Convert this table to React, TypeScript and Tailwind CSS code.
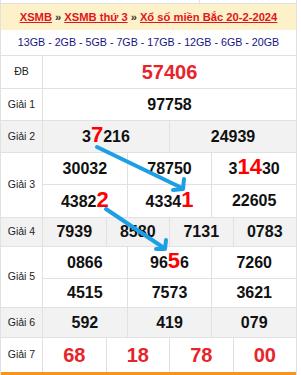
import React from 'react'

type Cell = React.ReactNode

function Red({children, big}: {children: React.ReactNode, big?: boolean}) {
    return <span className={big ? "text-[22px] text-[#ff0000] leading-none" : "text-[#ff0000]"}>{children}</span>
}

function Cells({items, h, last}: {items: Cell[], h: string, last?: boolean}) {
    return (
        <div className={`flex ${h} ${last ? "" : "border-b border-[#e1e1e1]"}`}>
            {items.map((c, i) => (
                <div key={i}
                     className={`flex-1 flex items-center justify-center text-[16px] font-bold text-[#111] ${i > 0 ? "border-l border-[#e1e1e1]" : ""}`}>
                    {c}
                </div>
            ))}
        </div>
    )
}

function Row({label, gray, h, children}: {label: string, gray?: boolean, h: string, children: React.ReactNode}) {
    return (
        <div className={`flex ${h} border-b border-[#e1e1e1] ${gray ? "bg-[#f2f2f2]" : "bg-white"}`}>
            <div className="w-[42px] shrink-0 flex items-center justify-center border-r border-[#e1e1e1] text-[10.5px] text-[#222]">
                {label}
            </div>
            <div className="flex-1 flex flex-col">{children}</div>
        </div>
    )
}

export default function App() {
    return (
        <div className="relative w-[301px] h-[375px] overflow-hidden bg-white font-[family-name:Liberation_Sans,Arial,sans-serif]">
            <div className="w-[297px] border-l border-r border-[#e1e1e1]">
                {/* bottom of previous table */}
                <div className="flex h-[4px] border-b border-[#e1e1e1]">
                    <div className="w-[199px] border-r border-[#e1e1e1]"></div>
                    <div className="flex-1"></div>
                </div>

                <div className="h-[26px] bg-[#fcf1c8] flex items-center justify-center text-[11.2px] font-bold text-[#333] whitespace-nowrap">
                    <a className="text-[#e3141c] underline">XSMB</a>
                    <span className="mx-[3px]">»</span>
                    <a className="text-[#e3141c] underline">XSMB thứ 3</a>
                    <span className="mx-[3px]">»</span>
                    <a className="text-[#e3141c] underline">Xổ số miền Bắc 20-2-2024</a>
                </div>

                <div className="h-[26px] flex items-center justify-center border-b border-[#e1e1e1] text-[10.7px] text-[#141482] whitespace-nowrap">
                    13GB - 2GB - 5GB - 7GB - 17GB - 12GB - 6GB - 20GB
                </div>

                <Row label="ĐB" h="h-[33px]">
                    <Cells last h="h-full" items={[<span className="text-[20px] text-[#e8242b]">57406</span>]}/>
                </Row>

                <Row label="Giải 1" h="h-[32px]">
                    <Cells last h="h-full" items={["97758"]}/>
                </Row>

                <Row label="Giải 2" gray h="h-[32px]">
                    <Cells last h="h-full" items={[<span>3<Red big>7</Red>216</span>, "24939"]}/>
                </Row>

                <Row label="Giải 3" h="h-[65px]">
                    <Cells h="h-[32px]" items={["30032", "78750", <span>3<Red big>14</Red>30</span>]}/>
                    <Cells last h="h-[32px]" items={[<span>4382<Red big>2</Red></span>, <span>4334<Red big>1</Red></span>, "22605"]}/>
                </Row>

                <Row label="Giải 4" gray h="h-[29px]">
                    <Cells last h="h-full" items={["7939", "8580", "7131", "0783"]}/>
                </Row>

                <Row label="Giải 5" h="h-[61px]">
                    <Cells h="h-[32px]" items={["0866", <span>96<Red big>5</Red>6</span>, "7260"]}/>
                    <Cells last h="h-[28px]" items={["4515", "7573", "3621"]}/>
                </Row>

                <Row label="Giải 6" gray h="h-[30px]">
                    <Cells last h="h-full" items={["592", "419", "079"]}/>
                </Row>

                <div className="flex h-[38px] border-b-4 border-[#f7941d] bg-white">
                    <div className="w-[42px] shrink-0 flex items-center justify-center border-r border-[#e1e1e1] text-[10.5px] text-[#222]">
                        Giải 7
                    </div>
                    <div className="flex-1 flex">
                        {["68", "18", "78", "00"].map((n, i) => (
                            <div key={n}
                                 className={`flex-1 flex items-center justify-center text-[20px] font-bold text-[#e8242b] ${i > 0 ? "border-l border-[#e1e1e1]" : ""}`}>
                                {n}
                            </div>
                        ))}
                    </div>
                </div>
            </div>

            {/* arrows */}
            <svg className="absolute top-0 left-0 pointer-events-none" width="301" height="375" viewBox="0 0 301 375">
                <g stroke="#1c9fe3" strokeWidth="4" strokeLinecap="round" strokeLinejoin="round" fill="none">
                    <line x1="97" y1="147" x2="182" y2="188"/>
                    <polyline points="173,190 183,189 184,179"/>
                    <line x1="106" y1="209" x2="164" y2="248"/>
                    <polyline points="156,249 165,249 166,240"/>
                </g>
            </svg>
        </div>
    )
}
